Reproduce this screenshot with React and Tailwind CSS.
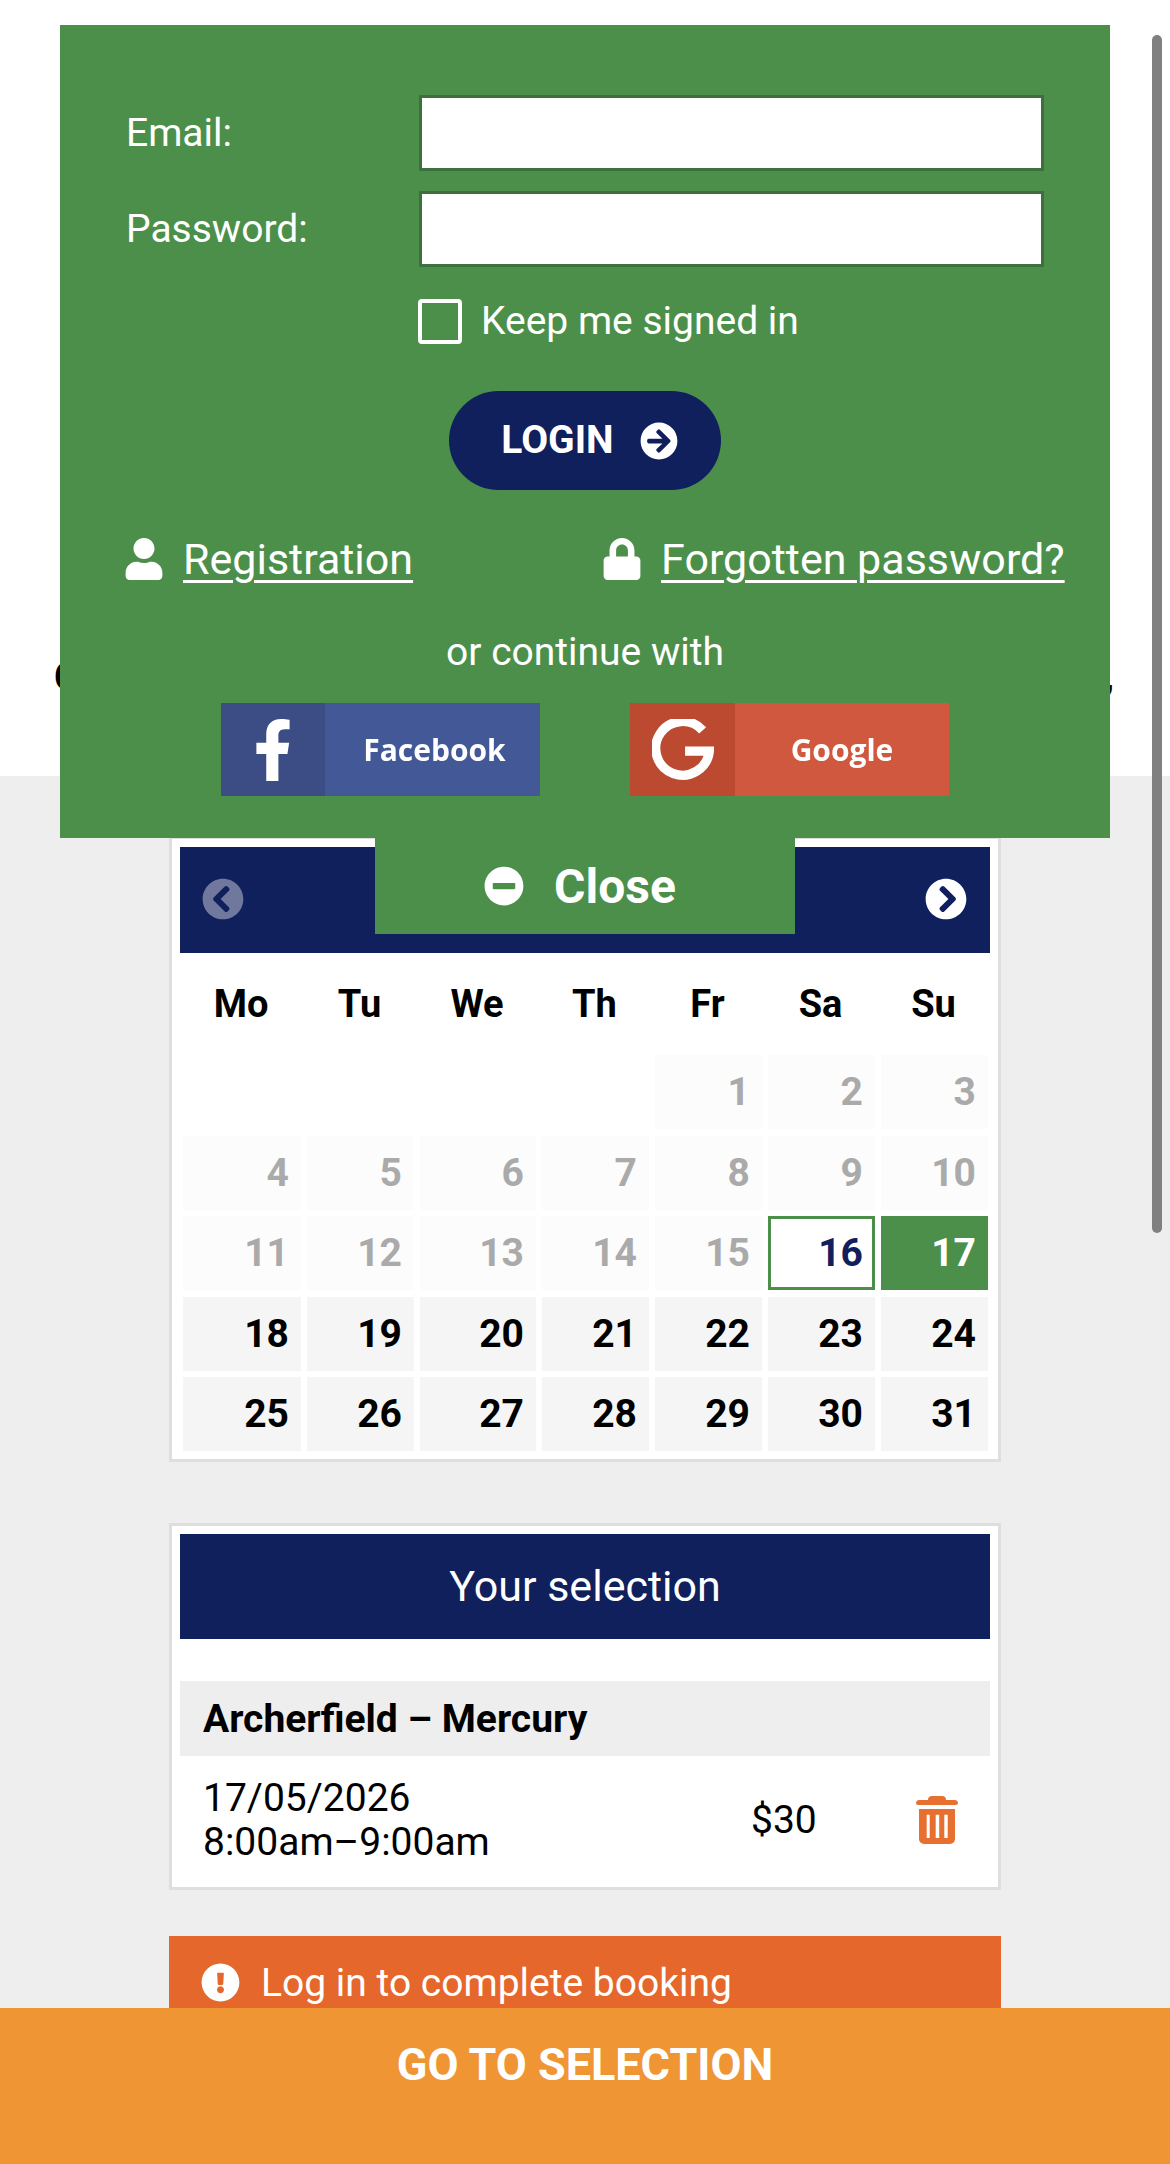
import {
  FaArrowCircleRight,
  FaChevronCircleLeft,
  FaChevronCircleRight,
  FaExclamationCircle,
  FaFacebookF,
  FaLock,
  FaMinusCircle,
  FaUser,
} from "react-icons/fa";

const COLUMNS = "grid grid-cols-[118px_107px_116px_107px_107px_107px_107px] gap-x-[6px]";

const WEEKDAYS = ["Mo", "Tu", "We", "Th", "Fr", "Sa", "Su"];

// leading blanks for a month starting on Friday
const BLANKS = [0, 1, 2, 3];
const DAYS = Array.from({ length: 31 }, (_, i) => i + 1);

function dayClass(day) {
  if (day === 16) return "bg-white border-[3px] border-[#4c8f4a] text-[#10205c] pr-[9px]";
  if (day === 17) return "bg-[#4c8f4a] text-white pr-[12px] pt-[1px]";
  if (day < 16) return "bg-[#fcfcfc] text-[#aaaaaa] pr-[12px] pt-[1px]";
  return "bg-[#f5f5f5] text-black pr-[12px] pt-[1px]";
}

function TrashIcon() {
  return (
    <svg viewBox="0 0 42 48" className="w-[42px] h-[48px] -mt-[2px] text-[#e76f2f]" fill="currentColor">
      <path d="M16 0h10a4 4 0 0 1 4 4h9a3 3 0 0 1 3 2.500v0a2.500 2.500 0 0 1-2.500 2.500H2.500A2.500 2.500 0 0 1 0 6.500v0A3 3 0 0 1 3 4h9a4 4 0 0 1 4-4z" />
      <path
        fillRule="evenodd"
        d="M3 13h36v30a5 5 0 0 1-5 5H8a5 5 0 0 1-5-5zM10.700 18.700V42h3V18.700zM19.700 18.700V42h3.500V18.700zM28.300 18.700V42h3.400V18.700z"
      />
    </svg>
  );
}

function GoogleG() {
  return (
    <svg viewBox="0 0 60 60" className="w-[62px] h-[62px] text-white" fill="none" stroke="currentColor" strokeWidth="9">
      <path d="M49 11A26 26 0 1 0 55.500 31H32" />
    </svg>
  );
}

function Field({ label, type }) {
  return (
    <div className="flex items-center h-[76px]">
      <label className="w-[293px] pt-[1px] text-[39px] text-white">{label}</label>
      <input type={type} className="w-[625px] h-[76px] bg-white border-[3px] border-[#3f6f3c]" />
    </div>
  );
}

function SocialButton({ icon, label, dark, light, darkWidth, textClass }) {
  return (
    <div className="flex w-[319px] h-[93px]" style={{ backgroundColor: light }}>
      <div
        className="h-full flex items-center justify-center text-white shrink-0"
        style={{ backgroundColor: dark, width: darkWidth }}
      >
        <div className="blur-[0.6px]">{icon}</div>
      </div>
      <div className={`flex-1 flex items-center justify-center font-['Open_Sans',sans-serif] font-bold text-[30px] text-white blur-[0.5px] ${textClass}`}>
        {label}
      </div>
    </div>
  );
}

function LoginPanel() {
  return (
    <div className="absolute left-[60px] top-[25px] w-[1050px] h-[813px] bg-[#4c8f4a] text-white">
      <div className="pt-[70px] pl-[66px] flex flex-col gap-[20px]">
        <Field label="Email:" type="email" />
        <Field label="Password:" type="password" />
      </div>

      <div className="mt-[32px] ml-[358px] flex items-center gap-[19px] h-[45px]">
        <input
          type="checkbox"
          className="appearance-none w-[44px] h-[45px] border-[4px] border-white rounded-[4px] bg-transparent"
        />
        <span className="text-[39px]">Keep me signed in</span>
      </div>

      <button className="flex items-center justify-center gap-[26px] mx-auto mt-[47px] w-[272px] h-[99px] pl-[9px] rounded-[50px] bg-[#10205c] text-white font-bold text-[39px]">
        LOGIN
        <FaArrowCircleRight className="w-[38px] h-[38px]" />
      </button>

      <div className="mt-[44px] pl-[65px] flex items-center h-[50px] text-[43px]">
        <FaUser className="w-[38px] h-[42px]" />
        <a className="ml-[20px] underline underline-offset-[6px] decoration-[3px]">Registration</a>
        <FaLock className="ml-[190px] w-[38px] h-[42px]" />
        <a className="ml-[20px] underline underline-offset-[6px] decoration-[3px]">Forgotten password?</a>
      </div>

      <p className="mt-[43px] text-center text-[39px] leading-[50px]">or continue with</p>

      <div className="mt-[26px] pl-[161px] flex gap-[90px]">
        <SocialButton
          icon={<FaFacebookF className="w-[40px] h-[62px]" />}
          label="Facebook"
          dark="#3b4d84"
          light="#435997"
          darkWidth={104}
          textClass="pl-[4px]"
        />
        <SocialButton
          icon={<GoogleG />}
          label="Google"
          dark="#bc4a30"
          light="#cf583f"
          darkWidth={105}
          textClass=""
        />
      </div>

      <button className="absolute left-[315px] top-[812px] w-[420px] h-[97px] pr-[10px] pt-[2px] bg-[#4c8f4a] flex items-center justify-center gap-[30px] font-bold text-[48px] text-white">
        <FaMinusCircle className="w-[40px] h-[40px] -mt-[2px]" />
        Close
      </button>
    </div>
  );
}

function Calendar() {
  return (
    <div className="mt-[60px] w-[832px] bg-white border-[3px] border-[#dedede] px-[8px] pt-[8px] pb-[8px]">
      <div className="h-[106px] bg-[#10205c] flex items-center justify-between pl-[22px] pr-[23px] pb-[2px]">
        <FaChevronCircleLeft className="w-[42px] h-[42px] text-white opacity-40" />
        <FaChevronCircleRight className="w-[42px] h-[42px] text-white" />
      </div>

      <div className={`${COLUMNS} pl-[2px] h-[102px] items-center text-center font-bold text-[38px] text-black`}>
        {WEEKDAYS.map((name) => (
          <div key={name}>{name}</div>
        ))}
      </div>

      <div className={`${COLUMNS} px-[3px] gap-y-[6.5px] auto-rows-[74px]`}>
        {BLANKS.map((n) => (
          <div key={n} />
        ))}
        {DAYS.map((day) => (
          <div
            key={day}
            className={`flex items-center justify-end font-bold text-[39px] ${dayClass(day)}`}
          >
            {day}
          </div>
        ))}
      </div>
    </div>
  );
}

function Selection() {
  return (
    <div className="mt-[61px] w-[832px] bg-white border-[3px] border-[#dedede] px-[8px] pt-[8px]">
      <div className="h-[105px] bg-[#10205c] flex items-center justify-center text-white text-[43px]">
        Your selection
      </div>
      <div className="mt-[42px] h-[75px] pt-[2px] bg-[#eeeeee] flex items-center pl-[23px] font-bold text-[39px] text-black">
        Archerfield – Mercury
      </div>
      <div className="h-[131px] pb-[2px] grid grid-cols-[548px_165px_42px] items-center pl-[23px] text-[39px] text-black">
        <div className="leading-[44px] -mt-[1px]">
          <div>17/05/2026</div>
          <div>8:00am–9:00am</div>
        </div>
        <div>$30</div>
        <TrashIcon />
      </div>
    </div>
  );
}

export default function App() {
  return (
    <div className="relative w-[1170px] h-[2164px] overflow-hidden flex flex-col bg-[#eeeeee] font-['Roboto',sans-serif]">
      <div className="h-[776px] bg-white flex items-start justify-between pl-[54px] pr-[56px] pt-[652px] text-[39px] leading-[50px] font-bold text-black shrink-0">
        <span>C</span>
        <span>,</span>
      </div>

      <div className="flex flex-col items-center">
        <Calendar />
        <Selection />
        <div className="mt-[46px] w-[832px] h-[100px] bg-[#e5672c] flex items-start pl-[32px] pt-[26px] gap-[21px] text-white text-[39px]">
          <FaExclamationCircle className="w-[39px] h-[39px] shrink-0 mt-[1px]" />
          <span className="leading-[40px] mt-[1px]">Log in to complete booking</span>
        </div>
      </div>

      <LoginPanel />

      {/* page scrollbar */}
      <div className="absolute left-[1152px] top-[35px] w-[10px] h-[1198px] rounded-full bg-[#808080]" />

      <div className="absolute left-0 bottom-0 w-full h-[156px] bg-[#f09534] flex justify-center pt-[23px] font-bold text-[45px] text-white">
        GO TO SELECTION
      </div>
    </div>
  );
}
